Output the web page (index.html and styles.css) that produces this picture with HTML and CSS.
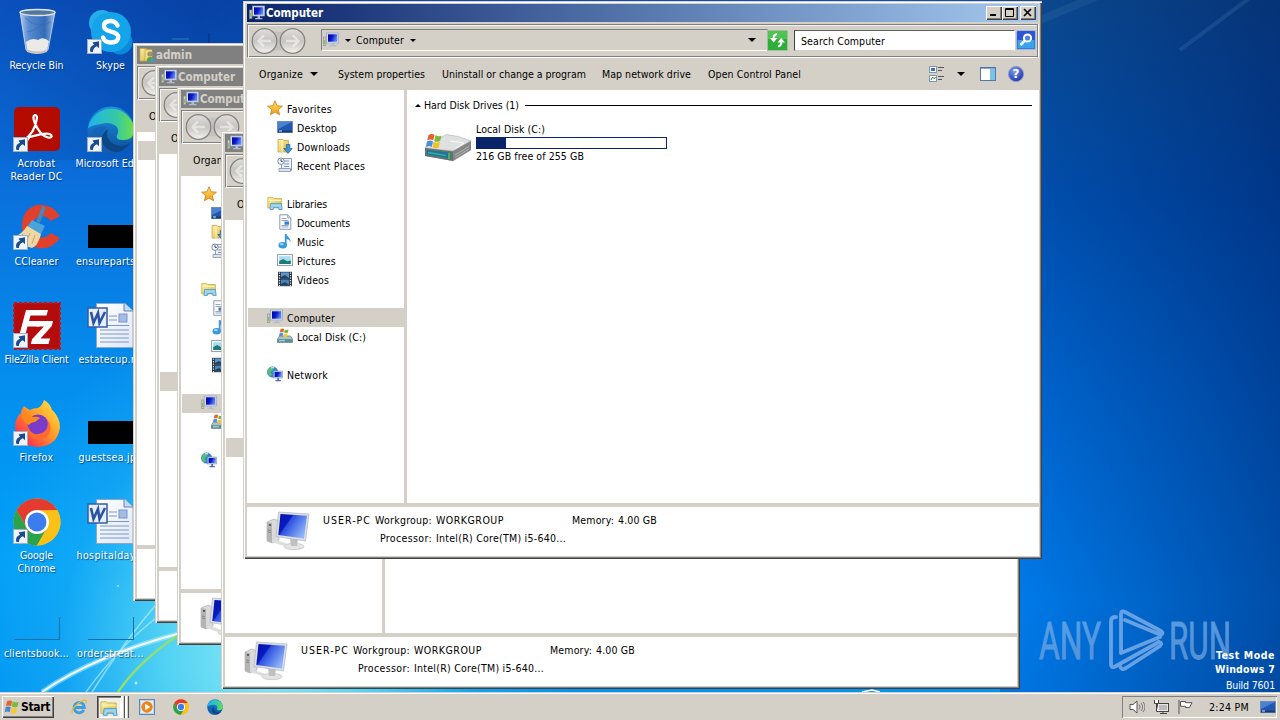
FILE: index.html
```html
<!DOCTYPE html>
<html lang="en">
<head>
<meta charset="utf-8">
<title>Desktop</title>
<link rel="stylesheet" href="styles.css">
</head>
<body>
<svg class="defs" width="0" height="0" aria-hidden="true">
  <defs>
    <linearGradient id="gScr" x1="0" y1="0" x2="1" y2="0.6"><stop offset="0" stop-color="#0010a8"/><stop offset=".38" stop-color="#0a1cc0"/><stop offset=".42" stop-color="#2c50e0"/><stop offset="1" stop-color="#8fb4f8"/></linearGradient>
    <linearGradient id="gScrS" x1="0" y1="0" x2="1" y2="0.3"><stop offset="0" stop-color="#0008a0"/><stop offset=".5" stop-color="#0a18c8"/><stop offset="1" stop-color="#5f86f0"/></linearGradient>
    <linearGradient id="gBtn" x1="0" y1="0" x2="0" y2="1"><stop offset="0" stop-color="#dedede"/><stop offset=".5" stop-color="#c6c4c0"/><stop offset="1" stop-color="#f2f2f0"/></linearGradient>
    <linearGradient id="gFold" x1="0" y1="0" x2="1" y2="1"><stop offset="0" stop-color="#fdf2a8"/><stop offset="1" stop-color="#dcb848"/></linearGradient>
    <linearGradient id="gStar" x1="0" y1="0" x2="0" y2="1"><stop offset="0" stop-color="#ffe45c"/><stop offset="1" stop-color="#f09a20"/></linearGradient>
    <linearGradient id="gEdge" x1="0" y1="0" x2="1" y2="0"><stop offset="0" stop-color="#1fb4ec"/><stop offset=".6" stop-color="#35c8a8"/><stop offset="1" stop-color="#6ee046"/></linearGradient>
    <linearGradient id="gEdge2" x1="0" y1="0" x2="0" y2="1"><stop offset="0" stop-color="#1c8fe0"/><stop offset="1" stop-color="#0c4f9c"/></linearGradient>
    <linearGradient id="gFox" x1="1" y1="0" x2="0" y2="1"><stop offset="0" stop-color="#fff04a"/><stop offset=".45" stop-color="#ff9a28"/><stop offset=".8" stop-color="#ff3c48"/><stop offset="1" stop-color="#e62a78"/></linearGradient>
    <linearGradient id="gBin" x1="0" y1="0" x2="1" y2="0"><stop offset="0" stop-color="#e4eef8" stop-opacity=".8"/><stop offset=".25" stop-color="#a8c4e4" stop-opacity=".5"/><stop offset=".7" stop-color="#5e86b8" stop-opacity=".5"/><stop offset="1" stop-color="#d4e2f2" stop-opacity=".8"/></linearGradient>
    <radialGradient id="gHelp" cx=".4" cy=".3" r=".8"><stop offset="0" stop-color="#7c9cf0"/><stop offset="1" stop-color="#1428a0"/></radialGradient>
    <linearGradient id="gDoc" x1="0" y1="0" x2="1" y2="1"><stop offset="0" stop-color="#fff"/><stop offset="1" stop-color="#dfe8f6"/></linearGradient>
    <linearGradient id="gMark" x1="0" y1="0" x2="0" y2="1"><stop offset="0" stop-color="#78b8f4"/><stop offset=".6" stop-color="#6fa4e0"/><stop offset="1" stop-color="#7d9fd2"/></linearGradient>
  </defs>

  <symbol id="i-computer" viewBox="0 0 16 16"><rect x=".5" y="5" width="2.400" height="8.600" fill="#c8d0c0" stroke="#8a8a8a" stroke-width=".6"/><rect x="1" y="8" width="1.200" height="4" fill="#7cc060"/><rect x="3.600" y="1" width="12" height="10" fill="#d8e2f4" stroke="#98a4bc" stroke-width=".7"/><rect x="5" y="2.300" width="9.300" height="7.400" fill="url(#gScrS)"/><path d="M8.500 11h2.500v2h2.400v1.300H6.200V13h2.300z" fill="#b4bcd0"/></symbol>
  <symbol id="i-star" viewBox="0 0 16 16"><path d="M8 .8l2.100 5 5.300.4-4.100 3.400 1.300 5.200L8 12l-4.600 2.800 1.300-5.200L.6 6.200l5.300-.4z" fill="url(#gStar)" stroke="#d8861c" stroke-width=".9"/></symbol>
  <symbol id="i-desktop" viewBox="0 0 16 16"><rect x=".5" y="2.500" width="15" height="11" fill="#2456b0" stroke="#6d8cb4"/><path d="M1 3h14L1 10z" fill="#4a82d0"/><rect x="1" y="11.500" width="14" height="2" fill="#123c78"/><path d="M2 12h3" stroke="#d8ecff"/></symbol>
  <symbol id="i-downloads" viewBox="0 0 16 16"><path d="M1 1.500h5l1 1h4.500V14H1z" fill="url(#gFold)" stroke="#c8a348" stroke-width=".8"/><path d="M5 2v12" stroke="#fff6c8"/><path d="M9.300 6.500h3.600v4h2.300L11 15.400 6.800 10.500h2.500z" fill="#3d94dc" stroke="#1c5c9c" stroke-width=".7"/></symbol>
  <symbol id="i-recent" viewBox="0 0 16 16"><path d="M4.500 1.500h10v12h-10z" fill="#eef2f8" stroke="#8e9cb0"/><path d="M7 4h5M7 7h5M7 9.500h5" stroke="#8094b4"/><path d="M2 11.500h11.500v3H2z" fill="#dce4ee" stroke="#8090a8" stroke-width=".8"/><circle cx="4" cy="4.200" r="3.200" fill="#f4f8fc" stroke="#7890a8"/><path d="M4 2.200v2.200h1.800" fill="none" stroke="#446"/></symbol>
  <symbol id="i-libraries" viewBox="0 0 16 16"><path d="M.8 2.500h5l1 1h7.600V13H.8z" fill="url(#gFold)" stroke="#c8b050" stroke-width=".8"/><path d="M1.500 5.500h12.500" stroke="#fff4b8"/><path d="M3.600 8.500h10.800l.8 6h-3.400v-2H6.400v2H3z" fill="#9ad4ee" stroke="#4c98c0" stroke-width=".8"/></symbol>
  <symbol id="i-documents" viewBox="0 0 16 16"><path d="M2.800.8h8l3 3v11.500h-11z" fill="#fafcff" stroke="#7c8ea8" stroke-width=".9"/><path d="M10.700.8v3.200h3" fill="#d8e4f2" stroke="#7c8ea8" stroke-width=".7"/><path d="M4.500 4.500h5M4.500 6.500h7M4.500 11.500h7M4.500 13h7" stroke="#96a6c0"/><rect x="7.500" y="7.500" width="4.500" height="3.200" fill="#3d7cc8"/></symbol>
  <symbol id="i-music" viewBox="0 0 16 16"><path d="M7.800 1h1.800c.3 2.600 3.900 3.200 4.200 8.400-1-2.300-2.300-3-4.200-3.400V12H7.800z" fill="#3f9be0"/><ellipse cx="5.700" cy="12.200" rx="4.200" ry="3.200" fill="#3798dc"/><ellipse cx="4.800" cy="11.200" rx="2" ry="1.100" fill="#9cd4f6"/></symbol>
  <symbol id="i-pictures" viewBox="0 0 16 16"><rect x=".6" y="2.600" width="14.800" height="11" fill="#fff" stroke="#8294a8" stroke-width=".9"/><rect x="2.200" y="4.200" width="11.600" height="7.800" fill="#a8dcf2"/><path d="M2.200 12V9l4-2 4 2.200 3.600-.8V12z" fill="#1e7c78"/></symbol>
  <symbol id="i-videos" viewBox="0 0 16 16"><rect x="1" y=".8" width="14" height="14.400" fill="#2a3440"/><rect x="4" y="1.400" width="8" height="6" fill="#5a94cc"/><rect x="4" y="8.600" width="8" height="6" fill="#4884bc"/><path d="M4 6l4-2 4 3v.4H4zM4 13l4-2 4 3v.6H4z" fill="#24425c"/><path d="M2.500 1.500v14M13.500 1.500v14" stroke="#e8eef4" stroke-width="1.200" stroke-dasharray="1.200 1.300"/></symbol>
  <symbol id="i-drive" viewBox="0 0 16 16"><path d="M2.500 8h11l2 3v3.500H.5V11z" fill="#b4c0c4" stroke="#6c7c80" stroke-width=".7"/><path d="M.7 11.200h14.600v3H.7z" fill="#4c9098"/><path d="M2 12.800h6" stroke="#c8e8e0"/><path d="M3.500 1.200q2-1.200 3.600-.1L6.400 4.400q-1.800-1-3.600 0z" fill="#e8642c"/><path d="M7.800 1.400q2 1 3.800.2l-.8 3.200q-2 .8-3.700-.2z" fill="#78b83c"/><path d="M2.600 5.200q1.900-1 3.600 0l-.7 3.200q-1.700-1-3.600 0z" fill="#4c90e0"/><path d="M6.900 5.400q2 1 3.700.2l-.7 3.200q-2 .8-3.700-.2z" fill="#f8c828"/></symbol>
  <symbol id="i-network" viewBox="0 0 16 16"><circle cx="5.600" cy="6" r="5.200" fill="#2c88d8" stroke="#2468a0" stroke-width=".5"/><path d="M2 2.600q3-2.500 5-1l-1.500 3-2 1.400L5 9l-2 1.500Q.2 7 .7 5z" fill="#58c070"/><path d="M4 2q2-1 3 0" stroke="#d8fff0" fill="none"/><rect x="6.600" y="5" width="9" height="7" fill="#c8d4ec" stroke="#8090b0" stroke-width=".6"/><rect x="7.600" y="6" width="7" height="5" fill="url(#gScrS)"/><path d="M10.300 12h1.700v2h1.800v1.200H8.500V14h1.800z" fill="#5068b0"/></symbol>
  <symbol id="i-folder-user" viewBox="0 0 16 16"><path d="M1 1.500h6l1 12.500H1z" fill="url(#gFold)" stroke="#c8a348" stroke-width=".8"/><path d="M6 2.500h7V14H6z" fill="#f0dc80" stroke="#c8a348" stroke-width=".6"/><circle cx="11" cy="7" r="2.600" fill="#9a9468"/><path d="M7.500 15q0-5 3.800-5t4 5z" fill="#58a058"/><path d="M12 12h3.500v3H12z" fill="#4898c0"/></symbol>
  <symbol id="i-hdd" viewBox="0 0 48 32"><path d="M1 18L20 6l27 5v9L29 31 1 26z" fill="#a4a6a6"/><path d="M1 18L22 4.500q13 1 25 6.500L29 21z" fill="#dfe1e1" stroke="#a8a8a8" stroke-width=".5"/><path d="M29 21l18-10v9L29 31z" fill="#858787"/><path d="M31 25l14-8.500M31 27.500l14-8.500" stroke="#bcbebe" stroke-width=".8"/><path d="M1 18l28 3.500V31L1 26z" fill="#5c7478"/><path d="M3 20l21 2.500v5.500L3 24.500z" fill="#1c7890"/><path d="M4 22.500l18 3" stroke="#38a8b0" stroke-width="1.500"/><path d="M25 23v6" stroke="#4cc050" stroke-width="1.600"/><path d="M26 11l14 2-9 6" stroke="#fafafa" fill="none"/><path d="M4.500 5q3.500-2 6 0l-1.300 5.500q-2.800-1.800-6 0z" fill="#e46030"/><path d="M11.500 5.300q3 1.700 6 .3l-1.300 5.500q-3.500 1.300-6-.3z" fill="#7cb83c"/><path d="M3 11.500q3.500-1.800 6 0L7.700 17q-2.700-1.800-6 0z" fill="#4a90d8"/><path d="M10 11.800q3 1.700 6 .3l-1.300 5.500q-3.500 1.300-6-.3z" fill="#f4c024"/></symbol>
  <symbol id="i-pc" viewBox="0 0 44 40"><path d="M1 11l7-3 5 2v19l-7 3-5-2z" fill="#dadada" stroke="#a8a8a8" stroke-width=".6"/><path d="M1 11l5 1v20l-5-2z" fill="#b4b4b4"/><circle cx="4" cy="14" r="1.100" fill="#405048"/><path d="M2 19l3 .7M2 21l3 .7" stroke="#777" stroke-width=".7"/><ellipse cx="28" cy="35.500" rx="10" ry="3.200" fill="#e4e4e4" stroke="#b8b8b8" stroke-width=".6"/><path d="M24 27l8 1-1 7h-6z" fill="#c0c0c0"/><path d="M8 30l12 4" stroke="#ddd" stroke-width="3"/><path d="M12.500 1L43 3l-3.500 27L10 25.500z" fill="#dcdfe6" stroke="#aeb4c0" stroke-width=".7"/><path d="M14.500 3L41 4.700 38 27.600 12.300 24z" fill="url(#gScr)"/></symbol>
  <symbol id="i-winflag" viewBox="0 0 16 16"><path d="M3 2.200q2.500-1.500 5 0L7 7.200q-2.500-1.500-5 0z" fill="#e8602c"/><path d="M8.700 2.600q3 1.500 6 .2l-1.200 5q-3 1.300-5.800-.2z" fill="#7cbc3c"/><path d="M1.700 8.300q2.500-1.500 5 0l-1 5q-2.500-1.500-5 0z" fill="#4488dc"/><path d="M7.500 8.700q3 1.500 5.800.2l-1.100 5q-3 1.300-5.800-.2z" fill="#f8c82c"/></symbol>
  <symbol id="i-shortcut" viewBox="0 0 15 15"><rect x=".5" y=".5" width="14" height="14" fill="#eef3fa" stroke="#9cb0c8"/><path d="M3.500 13Q1.800 7.500 7 5.700L5.500 3.500 12 2.200v7L9.900 7.300Q6.300 8.500 5.800 13z" fill="#1c4a90"/></symbol>
  <symbol id="i-ie" viewBox="0 0 16 16"><path d="M12.800 11a5.200 5.200 0 1 1 .6-2.500H4.500" fill="none" stroke="#3f9ee0" stroke-width="2.800"/><path d="M1.500 14.500Q-.5 11 6 5.500T15.300 1.500q.5 1-.9 3" fill="none" stroke="#e8bc38" stroke-width="1.200"/></symbol>
  <symbol id="i-wmp" viewBox="0 0 16 16"><rect x=".5" y=".5" width="15" height="15" fill="#b8d4ee" stroke="#5888b8"/><rect x="2" y="2" width="12" height="12" fill="#fff" opacity=".6"/><circle cx="8" cy="8" r="5.700" fill="#f08418"/><path d="M6.200 4.800l5 3.200-5 3.200z" fill="#fff"/></symbol>
  <symbol id="i-chrome" viewBox="0 0 48 48"><circle cx="24" cy="24" r="23.500" fill="#fbc116"/><path d="M3.600 12.300A23.500 23.500 0 0 1 44.400 12.300L24 13 14 30z" fill="#e33b2e"/><path d="M3.600 12.300A23.500 23.500 0 0 0 24 47.500L34 30 14 30z" fill="#2da24c"/><path d="M44.400 12.300H24l10 17.700-10 17.500A23.500 23.500 0 0 0 44.400 12.300z" fill="#fbc116"/><circle cx="24" cy="24" r="12" fill="#fff"/><circle cx="24" cy="24" r="9.500" fill="#3b7ded"/></symbol>
  <symbol id="i-edge" viewBox="0 0 48 48"><circle cx="24" cy="24" r="23.500" fill="url(#gEdge2)"/><path d="M1 22A23.500 23.500 0 0 1 47.500 24Q47 34 36 34q-8 0-6-5 3-5-1-9-6-5-15-2Q5 19 1 22z" fill="url(#gEdge)"/><path d="M20 21q-8 6-4 15 5 9 16 10-20 5-27-8-3-8 1-14 6-5 14-3z" fill="#1560b4" opacity=".75"/><path d="M21 23q-3 8 4 14 9 6 18 0-6 9-15 9-13-3-13-13 0-6 6-10z" fill="#0d4684"/></symbol>
  <symbol id="i-skype" viewBox="0 0 48 48"><circle cx="15" cy="15" r="13" fill="#25aee8"/><circle cx="33" cy="34" r="12.500" fill="#0b8adc"/><circle cx="24" cy="24" r="20" fill="#14a4ea"/><path d="M30.500 17.500q-2-4.500-7-4.500-6.500 0-6.500 5 0 4 7.200 5.600 7 1.500 7 5.700 0 5.200-7.400 5.200-6 0-7.800-5" fill="none" stroke="#fff" stroke-width="4.400" stroke-linecap="round"/></symbol>
  <symbol id="i-bin" viewBox="0 0 48 48"><path d="M7 4l6 38q11 6 22 0l7-38z" fill="url(#gBin)" stroke="#cfe0f2" stroke-width=".8"/><path d="M13 34q6-5 12-2 5-4 11 1l-2 10q-10 5-20 0z" fill="#eceae6"/><path d="M13.500 41q11 5 21 0l-.5 3q-10 4-20 0z" fill="#c8c4c0"/><path d="M12 10q14 12 26 4M14 24q12-2 21-13" stroke="#3867a4" stroke-width="1" fill="none" opacity=".6"/><ellipse cx="24.500" cy="4.500" rx="17.500" ry="3" fill="#53779f" stroke="#dde4ea" stroke-width="1.400"/></symbol>
  <symbol id="i-acrobat" viewBox="0 0 48 48"><rect x="1" y="1" width="46" height="44" rx="5" fill="#b30b00"/><path d="M10 35q12-8 14-23 0-3-2.200-3-2.800 1 0 8 5 12 13 14.500 5 .5 3.500-2.300-2-2.800-11-.8T10 33q-3 3.500-.5 4.500 3 .3 7-6.500" fill="none" stroke="#fff" stroke-width="2.200" stroke-linecap="round"/></symbol>
  <symbol id="i-ccleaner" viewBox="0 0 48 48"><path d="M47 12Q38-1 24 1 9 5 9 22t16 22q14 2 22-10l-9-5q-6 6-13 4-7-3-6-12 2-8 9-9 6 0 10 5z" fill="#e0402c"/><path d="M31 3l-6 15" stroke="#4a88b8" stroke-width="4"/><path d="M19 16l13 6-4 8-14-7z" fill="#4aa4dc"/><path d="M14 22l14 8q-3 12-9 14-12-3-18-11 8-3 13-11z" fill="#f0d8a4"/><path d="M10 30l-3 4M17 29l-4 9M22 31l-3 9" stroke="#c8a468"/></symbol>
  <symbol id="i-filezilla" viewBox="0 0 48 48"><rect x="1" y="1" width="46" height="46" fill="#b40c0c" stroke="#c01818" stroke-width="2" stroke-dasharray="3 2"/><path d="M13 8h22l-1.500 5.500H17.500L16 19h12l-1.500 5.500H14.500L11 38H5z" fill="#fff"/><path d="M25 19h15l-1.200 5L27.500 36.500H37L35.500 42H17.800l1.400-5L31 24.500h-7.500z" fill="#fff"/></symbol>
  <symbol id="i-firefox" viewBox="0 0 48 48"><path d="M45 18q-3-6-6-8Q37 3 31 0q-2 6-6 8-5 0-8 2-4-2-6-4-3 4-3 7-6 5-6 14Q4 45 24 47q21-1 23-20 0-5-2-9z" fill="url(#gFox)"/><circle cx="25" cy="25" r="10.500" fill="#7a3cc8"/><path d="M8 14q7-1 12 3 5-1 7 1l-5 4q-4 0-6 3-6-3-8-11z" fill="#ff8a1c"/><path d="M15 27q4 10 14 6 8-4 5-14 6 7 2 15-6 8-15 5-7-3-6-12z" fill="#ff6a30"/></symbol>
  <symbol id="i-word" viewBox="0 0 48 48"><path d="M9.500 1.500H38L46 9v36.500H9.500z" fill="url(#gDoc)" stroke="#8ea6cc"/><path d="M37 1.500V9h9" fill="#c8daf2" stroke="#6080b4"/><path d="M22 14h8M22 18h8M13 23.500h29M13 28h29M13 32h29M13 36h29M13 40h29" stroke="#7a96cc"/><rect x="32" y="12" width="8" height="8" fill="#a4bce4" stroke="#7a96cc"/><rect x="1" y="6" width="19" height="19" fill="#e8eefa" stroke="#305ca8" stroke-width="1.500"/><path d="M4 10l2.500 11L11 11l1.500 10L18 10" fill="none" stroke="#2c54a4" stroke-width="2.600"/></symbol>
</svg>

<div class="wallpaper">
  <svg width="1280" height="693" viewBox="0 0 1280 693">
    <path d="M1100 -5L1040 20" stroke="#fff" opacity=".05" stroke-width="8"/>
    <path d="M1255-6L1180 50" stroke="#7fb0d8" opacity=".14" stroke-width="4"/>
    <path d="M42 692Q95 655 185 632" fill="none" stroke="#b8f0fa" stroke-width="5" opacity=".5"/>
    <path d="M42 692Q95 655 185 632" fill="none" stroke="#f0ffff" stroke-width="2"/>
    <path d="M86 692Q120 645 160 615M92 692Q125 640 160 600" fill="none" stroke="#c8f4fc" stroke-width="1.500" opacity=".6"/>
    <path d="M118 692Q140 660 180 634" fill="none" stroke="#90e070" stroke-width="2.500"/>
    <path d="M862 692l10-2 8 2" stroke="#fff" stroke-width="1.500" fill="none"/>
    <circle cx="136" cy="683" r="1.500" fill="#dffaff" opacity=".7"/><circle cx="118" cy="586" r="1" fill="#dffaff" opacity=".7"/>
    <path d="M172 39h17" stroke="#2484bc"/><path d="M209 33v10" stroke="#07307c"/>
  </svg>
</div>

<main class="desktop">
  <div class="shortcuts">
    <div class="ico"><svg class="pic"><use href="#i-bin"/></svg><span data-w="54">Recycle Bin</span></div>
    <div class="ico"><svg class="pic"><use href="#i-acrobat"/></svg><svg class="arrow"><use href="#i-shortcut"/></svg><span data-w="38">Acrobat</span><span data-w="52">Reader DC</span></div>
    <div class="ico"><svg class="pic"><use href="#i-ccleaner"/></svg><svg class="arrow"><use href="#i-shortcut"/></svg><span data-w="44">CCleaner</span></div>
    <div class="ico"><svg class="pic"><use href="#i-filezilla"/></svg><svg class="arrow"><use href="#i-shortcut"/></svg><span data-w="64">FileZilla Client</span></div>
    <div class="ico"><svg class="pic"><use href="#i-firefox"/></svg><svg class="arrow"><use href="#i-shortcut"/></svg><span data-w="34">Firefox</span></div>
    <div class="ico"><svg class="pic"><use href="#i-chrome"/></svg><svg class="arrow"><use href="#i-shortcut"/></svg><span data-w="33">Google</span><span data-w="38">Chrome</span></div>
    <div class="ico"><i class="ghost"></i><span data-w="65">clientsbook...</span></div>
  </div>
  <div class="shortcuts second">
    <div class="ico"><svg class="pic"><use href="#i-skype"/></svg><svg class="arrow"><use href="#i-shortcut"/></svg><span data-w="29">Skype</span></div>
    <div class="ico"><svg class="pic"><use href="#i-edge"/></svg><svg class="arrow"><use href="#i-shortcut"/></svg><span data-w="70">Microsoft Edge</span></div>
    <div class="ico"><i class="thumb"></i><span data-w="69">ensureparts...</span></div>
    <div class="ico"><svg class="pic"><use href="#i-word"/></svg><span data-w="64">estatecup.rtf</span></div>
    <div class="ico"><i class="thumb"></i><span data-w="64">guestsea.jpg</span></div>
    <div class="ico"><svg class="pic"><use href="#i-word"/></svg><span data-w="68">hospitalday...</span></div>
    <div class="ico"><i class="ghost"></i><span data-w="67">orderstreat...</span></div>
  </div>
</main>

<div class="brand">
  <svg width="196" height="66" viewBox="0 0 196 66">
    <g fill="url(#gMark)" stroke="#74a8e4" stroke-width=".9" opacity=".75" font-family="Roboto, sans-serif" font-size="52">
      <text x="1" y="50.500" textLength="62" lengthAdjust="spacingAndGlyphs">ANY</text>
      <text x="131" y="50.500" textLength="62" lengthAdjust="spacingAndGlyphs">RUN</text>
    </g>
    <g fill="none" stroke="#78acea" stroke-width="3.800" stroke-linejoin="round" stroke-linecap="round" opacity=".85">
      <path d="M78 9Q73 9 73 13V56Q73 61 78 58L121 34"/>
      <path d="M83 45V6Q83 2 87 4L123 23Q126 25 123 27L87 12M83 45L122 29"/>
      <path d="M82 58Q83 63 88 60L122 38Q125 35 121 34"/>
    </g>
  </svg>
</div>
<div class="build"><b data-w="59">Test Mode</b><b data-w="60">Windows 7</b><span data-w="49">Build 7601</span></div>

<div id="windows"></div>

<template id="explorer">
  <section class="window">
    <header class="title"><svg class="i16"><use href="#i-computer"/></svg><b data-w="57">Computer</b>
      <div class="caption"><i class="cap"><svg width="10" height="9"><path d="M1 7h6" stroke="#000" stroke-width="2"/></svg></i><i class="cap"><svg width="10" height="9"><path d="M.5 .5h8v8h-8zM0 1.500h9" fill="none" stroke="#000"/></svg></i><i class="cap gap"><svg width="10" height="9"><path d="M1 1l7 7M8 1l-7 7" stroke="#000" stroke-width="1.600"/></svg></i></div>
    </header>
    <div class="nav">
      <svg class="history" width="56" height="28" viewBox="0 0 56 28"><path d="M14 2q14 6 28 0v24q-14-6-28 0z" fill="#c4c2be"/><g fill="url(#gBtn)" stroke="#85837f" stroke-width="1.300"><circle cx="13.500" cy="14" r="12.300"/><circle cx="41.500" cy="14" r="12.300"/></g><g fill="none" stroke="#fff" stroke-width="2.400" opacity=".5"><path d="M20 14H8M13 8.500L7.500 14 13 19.500M35 14h12M42 8.500l5.500 5.500-5.500 5.500"/></g></svg>
      <div class="address"><svg class="i16"><use href="#i-computer"/></svg><i class="tri"></i><span data-w="48">Computer</span><i class="tri"></i><i class="tri last"></i></div>
      <svg class="refresh" width="21" height="21" viewBox="0 0 21 21"><rect x=".5" y=".5" width="20" height="20" fill="#2cae38" stroke="#a0c0a0"/><rect x="1" y="1" width="19" height="8" fill="#66d066" opacity=".6"/><path d="M3 8h7.500L6.700 12.500zM10.500 12.500H18L14.200 8z" fill="#fff"/><path d="M6.700 9V7q0-2 3.300-3M14.200 11v2.500q0 2-3.200 3" fill="none" stroke="#fff" stroke-width="2"/></svg>
      <div class="search"><span data-w="84">Search Computer</span></div>
      <svg class="go" width="20" height="20" viewBox="0 0 20 20"><rect x=".5" y=".5" width="19" height="19" rx="1.500" fill="#2b55d4" stroke="#a8b8d8"/><rect x="1.500" y="10" width="17" height="8.500" fill="#38a4ea"/><circle cx="11.500" cy="8" r="3.600" fill="#4c86e4" stroke="#fff" stroke-width="2"/><path d="M8.800 10.700L4.500 15" stroke="#fff" stroke-width="2.600"/></svg>
    </div>
    <div class="commands">
      <span data-w="44">Organize</span><i class="tri big"></i><span class="c2" data-w="87">System properties</span><span class="c3" data-w="144">Uninstall or change a program</span><span class="c3 map" data-w="89">Map network drive</span><span class="c3" data-w="93">Open Control Panel</span>
      <svg class="view" width="110" height="18" viewBox="0 0 110 18"><rect x="2.500" y="1.500" width="7" height="6" fill="#fff" stroke="#7c98b0"/><rect x="4" y="3" width="4" height="3" fill="#3c74b8"/><rect x="2.500" y="10.500" width="7" height="6" fill="#fff" stroke="#7c98b0"/><path d="M4 15l1.500-3 2 2 .8-2" stroke="#388048" fill="none"/><path d="M11 2.500h6M11 5.500h4M11 11.500h6M11 14.500h4" stroke="#555"/><path d="M30 7h8l-4 4z"/><rect x="53.500" y="2.500" width="15" height="13" fill="#fff" stroke="#5078a8"/><path d="M54 3.500h14" stroke="#86a8cc"/><rect x="63" y="4" width="5" height="11" fill="#7cc0ec"/><circle cx="89" cy="9" r="7.600" fill="url(#gHelp)" stroke="#8c9ccc"/><text x="89" y="13.300" text-anchor="middle" font-family="DejaVu Sans" font-size="12" font-weight="700" fill="#fff">?</text></svg>
    </div>
    <div class="body">
      <aside>
        <div class="row" data-row="favorites"><svg class="i16"><use href="#i-star"/></svg><span data-w="45">Favorites</span></div>
        <div class="row sub"><svg class="i16"><use href="#i-desktop"/></svg><span data-w="40">Desktop</span></div>
        <div class="row sub"><svg class="i16"><use href="#i-downloads"/></svg><span data-w="53">Downloads</span></div>
        <div class="row sub"><svg class="i16"><use href="#i-recent"/></svg><span data-w="68">Recent Places</span></div>
        <div class="row"></div>
        <div class="row"><svg class="i16"><use href="#i-libraries"/></svg><span data-w="40">Libraries</span></div>
        <div class="row sub"><svg class="i16"><use href="#i-documents"/></svg><span data-w="53">Documents</span></div>
        <div class="row sub"><svg class="i16"><use href="#i-music"/></svg><span data-w="27">Music</span></div>
        <div class="row sub"><svg class="i16"><use href="#i-pictures"/></svg><span data-w="39">Pictures</span></div>
        <div class="row sub"><svg class="i16"><use href="#i-videos"/></svg><span data-w="32">Videos</span></div>
        <div class="row"></div>
        <div class="row" data-row="computer"><svg class="i16"><use href="#i-computer"/></svg><span data-w="48">Computer</span></div>
        <div class="row sub"><svg class="i16"><use href="#i-drive"/></svg><span data-w="69">Local Disk (C:)</span></div>
        <div class="row"></div>
        <div class="row"><svg class="i16"><use href="#i-network"/></svg><span data-w="41">Network</span></div>
      </aside>
      <div class="files">
        <div class="group"><i class="up"></i><span data-w="95">Hard Disk Drives (1)</span><hr></div>
        <div class="disk"><svg width="48" height="32"><use href="#i-hdd"/></svg>
          <div class="meta"><span data-w="69">Local Disk (C:)</span><div class="bar"><i></i></div><span data-w="108">216 GB free of 255 GB</span></div>
        </div>
      </div>
    </div>
    <footer class="details">
      <svg width="44" height="40"><use href="#i-pc"/></svg>
      <div class="facts"><span data-w="48">USER-PC</span><span class="k" data-w="57">Workgroup:</span><span data-w="68">WORKGROUP</span><span class="k" data-w="42">Memory:</span><span data-w="39">4.00 GB</span><span class="k second" data-w="52">Processor:</span><span class="wide" data-w="130">Intel(R) Core(TM) i5-640...</span></div>
    </footer>
  </section>
</template>

<nav class="taskbar">
  <div class="start"><svg class="i16"><use href="#i-winflag"/></svg><b data-w="29">Start</b></div>
  <svg class="q"><use href="#i-ie"/></svg>
  <div class="stack"><div class="task"><svg class="t18"><use href="#i-libraries"/></svg></div><i></i><i></i></div>
  <svg class="q"><use href="#i-wmp"/></svg>
  <svg class="q"><use href="#i-chrome"/></svg>
  <svg class="q"><use href="#i-edge"/></svg>
  <div class="tray">
    <svg class="i16" viewBox="0 0 16 16"><path d="M1 5.500h3L8 2v12l-4-3.500H1z" fill="#fff" stroke="#555"/><path d="M10 5.500q2 2.500 0 5M12 4q3.200 4 0 8M14 2.800q4 5.200 0 10.400" fill="none" stroke="#777"/></svg>
    <svg class="i16" viewBox="0 0 16 16"><rect x="4.500" y="4.500" width="11" height="8" fill="#e8e8e8" stroke="#444"/><path d="M7 14.500h7M10 12.500v2" stroke="#444"/><rect x="6" y="6" width="8" height="5" fill="#bbb"/><path d="M1.500 1v3.500h4V1M3.500 5v7.500h2" fill="#fff" stroke="#444"/></svg>
    <svg class="i16" viewBox="0 0 16 16"><path d="M2 1v14" stroke="#555"/><path d="M3.500 2.500h5v1.200h6.500l-2.500 4.800H8.500V7.300h-5z" fill="#fff" stroke="#555"/></svg>
    <span data-w="40">2:24 PM</span>
    <svg class="i16" viewBox="0 0 16 16"><use href="#i-desktop"/></svg>
  </div>
</nav>
<script src="desktop.js"></script>
</body>
</html>
```
FILE: styles.css
```css
* { box-sizing: border-box; }
body { margin: 0; width: 1280px; height: 720px; overflow: hidden; position: relative; background: #0a72dc; color: #000; font: 10.5px/13px "DejaVu Sans Condensed", "DejaVu Sans", sans-serif; }
.defs { position: absolute; }
i { font-style: normal; display: block; }
svg { display: block; flex: none; }
span, b { white-space: nowrap; }
.i16 { width: 16px; height: 16px; }

.wallpaper { position: absolute; inset: 0 0 27px 0; background:
  linear-gradient(90deg, transparent 1010px, rgba(0,40,120,0) 1020px, rgba(0,24,90,.45) 1280px),
  linear-gradient(180deg, #0b498f 0, #0050b0 200px, #0066d0 400px, #007ae8 600px, #0074e0 100%) 1000px 0 / 280px 100% no-repeat,
  radial-gradient(ellipse 300px 340px at 270px 650px, #8eeaf2 0, rgba(96,220,244,.85) 35%, rgba(40,180,244,.4) 70%, rgba(30,170,244,0) 100%),
  linear-gradient(100deg, rgba(0,30,110,0) 0, rgba(0,24,100,.26) 200px, transparent 700px) 0 0 / 100% 160px no-repeat,
  linear-gradient(180deg, #0a50bc 0, #0a70dc 190px, #048eee 380px, #00a0f8 560px, #0096f2 100%); }

.desktop { position: absolute; left: -1px; top: 8px; display: flex; }
.shortcuts { display: grid; grid-auto-rows: 98px; width: 75px; }
.shortcuts.second { margin-left: -1px; }
.ico { position: relative; display: flex; flex-direction: column; align-items: center; color: #fff; text-shadow: 1px 1px 1px rgba(0,20,70,.6); }
.pic { width: 48px; height: 48px; margin-bottom: 3px; }
.arrow { position: absolute; left: 14px; top: 31px; width: 15px; height: 15px; }
.thumb { width: 46px; height: 23px; background: #000; margin: 21px 0 7px; }
.ghost { width: 46px; height: 23px; border-right: 1px solid #0c70a8; border-bottom: 1px solid #0c70a8; margin: 21px 0 7px; }

.brand { position: absolute; left: 1038px; top: 608px; }
.brand svg { overflow: visible; }
.build { position: absolute; right: 5px; top: 648px; display: flex; flex-direction: column; align-items: flex-end; color: #fff; line-height: 14px; }
.build span { padding-top: 2px; }

.window { position: absolute; width: 799px; height: 558px; padding: 3px 3px 3px 4px; background: #d4d0c8; display: flex; flex-direction: column;
  box-shadow: inset 1px 1px #d4d0c8, inset 2px 2px #fff, inset -1px -1px #404040, inset -2px -2px #808080; }
.title { height: 18px; margin: 0 1px 2px 0; padding: 0 2px; display: flex; align-items: center; background: #808080; color: #d4d0c8; }
.title b { font-size: 11.5px; margin-left: 1px; }
.active .title { background: linear-gradient(90deg, #0a246a, #a6caf0); color: #fff; }
.caption { display: flex; margin-left: auto; }
.cap { width: 16px; height: 14px; padding: 2px 0 0 3px; background: #d4d0c8; box-shadow: inset 1px 1px #fff, inset -1px -1px #404040, inset -2px -2px #808080; }
.cap.gap { margin-left: 2px; }
.nav { height: 34px; border: 1px solid #808080; border-bottom-color: #fff; box-shadow: inset 1px 1px #f4f2ee, inset 0 -1px #808080, 1px 0 #fff; margin-right: 1px; display: flex; align-items: center; padding-left: 3px; }
.address { margin-left: 14px; width: 447px; height: 22px; padding-left: 1px; border: 1px solid; border-color: #808080 #d4d0c8 #fff #808080; display: flex; align-items: center; }
.address, .refresh, .search, .go { transform: translateY(-1px); }
.address .i16 { margin-bottom: 1px; }
.tri { width: 0; height: 0; border: 3px solid transparent; border-top-color: #000; border-bottom: 0; margin: 0 5px 0 6px; }
.address span + .tri { margin-left: 6px; }
.tri.last { border-width: 4px 4px 0; margin: 0 11px 0 auto; }
.tri.big { border-width: 4px 4px 0; margin: 0 0 0 7px; }
.refresh { margin-left: -1px; }
.search { margin-left: 6px; width: 221px; height: 21px; background: #fff; border: 1px solid; border-color: #606060 #fff #d4d0c8 #404040; padding: 4px 0 0 6px; }
.go { margin-left: 1px; }
.commands { height: 32px; padding-left: 12px; display: flex; align-items: center; }
.c2 { margin-left: 20px; }
.c3 { margin-left: 17px; }
.c3.map { margin-left: 16px; }
.view { margin: 0 2px 0 auto; }
.body { height: 413px; display: flex; background: #fff; }
aside { width: 157px; padding: 9px 0 0 1px; }
.row { height: 19px; padding-left: 19px; display: flex; align-items: center; gap: 4px; }
.row .i16 { margin-bottom: 2px; }
.row span { padding-top: 1px; }
.row.sub { padding-left: 29px; }
.row.selected { background: #d4d0c8; }
.files { flex: 1; border-left: 3px solid #d4d0c8; padding: 8px 7px 0 8px; }
.group { display: flex; align-items: center; height: 14px; }
.up { border: 3px solid transparent; border-top: 0; border-bottom-color: #000; margin-right: 3px; }
.group hr { flex: 1; height: 1px; border: 0; background: #000; margin: 0 0 0 6px; }
.disk { display: flex; align-items: flex-start; gap: 3px; margin: 11px 0 0 10px; }
.disk svg { margin: 7px 0 0 -1px; }
.meta { display: flex; flex-direction: column; align-items: flex-start; margin-left: 1px; }
.bar { width: 191px; height: 12px; border: 1px solid #0a246a; margin: 1px 0; background: #fff; }
.bar i { width: 29px; height: 10px; background: #0a246a; }
.details { height: 49px; margin-top: 4px; background: #fff; padding: 4px 0 0 19px; display: flex; }
.facts { display: grid; grid-template-columns: 48px 57px 68px 106px 39px; grid-template-rows: 18px 18px; column-gap: 4px; justify-items: start; margin: 3px 0 0 13px; }
.facts .k { justify-self: end; }
.facts .second { grid-column: 2; }
.facts .wide { grid-column: 3 / 6; }

.taskbar { position: absolute; left: 0; right: 0; bottom: 0; height: 28px; background: #d4d0c8; box-shadow: inset 0 1px #d4d0c8, inset 0 2px #fff; display: flex; align-items: center; padding: 2px 3px 0 2px; }
.start { width: 52px; height: 22px; display: flex; align-items: center; gap: 1px; padding-left: 2px; box-shadow: inset 1px 1px #fff, inset -1px -1px #404040, inset -2px -2px #808080; margin-right: 17px; }
.start b { font-size: 12px; }
.q { width: 16px; height: 16px; margin-right: 18px; }
.stack + .q { margin-left: 10px; }
.q:first-of-type { margin-right: 10px; }
.stack { display: flex; }
.task { width: 24px; height: 22px; padding: 3px; background: #f0eee9; box-shadow: inset 1px 1px #404040, inset 2px 2px #808080, inset -1px -1px #fff; }
.t18 { width: 18px; height: 18px; }
.stack i { width: 4px; height: 22px; background: #d4d0c8; border-right: 1px solid #555; border-left: 2px solid #fff; }
.tray { margin-left: auto; height: 22px; width: 155px; display: flex; align-items: center; padding-left: 7px; gap: 8px; box-shadow: inset 1px 1px #808080, inset -1px -1px #fff; }
.tray span { margin: 0 3px 0 8px; }
```
FILE: desktop.js
```js
const windows = [
  { x: 133, y: 43, title: 'admin', width: 36, icon: 'i-folder-user', row: 'favorites', covered: '.facts' },
  { x: 155, y: 65, row: 'computer', covered: '.facts' },
  { x: 177, y: 87, row: 'computer', covered: '.facts' },
  { x: 221, y: 131, row: 'computer', covered: '.title b' },
  { x: 243, y: 1, row: 'computer', active: true }
];

// Labels that lie wholly under the front window.
const behind = '.c2, .c3, .address span, .search span, .row span, .group, .disk, .view text';

const host = document.getElementById('windows');
const template = document.getElementById('explorer');

for (const w of windows) {
  const win = template.content.cloneNode(true).querySelector('.window');
  win.style.left = w.x + 'px';
  win.style.top = w.y + 'px';
  if (w.active) win.classList.add('active');
  else win.querySelectorAll(behind + ', ' + w.covered).forEach(el => el.remove());
  if (w.title) {
    const label = win.querySelector('.title b');
    label.textContent = w.title;
    label.dataset.w = w.width;
    win.querySelector('.title use').setAttribute('href', '#' + w.icon);
  }
  win.querySelector('[data-row="' + w.row + '"]').classList.add('selected');
  host.appendChild(win);
}

// Track each label so that it fills its nominal width.
for (const el of document.querySelectorAll('[data-w]')) {
  const target = Number(el.dataset.w);
  const natural = el.getBoundingClientRect().width;
  el.style.letterSpacing = ((target - natural) / el.textContent.length).toFixed(3) + 'px';
}
```
